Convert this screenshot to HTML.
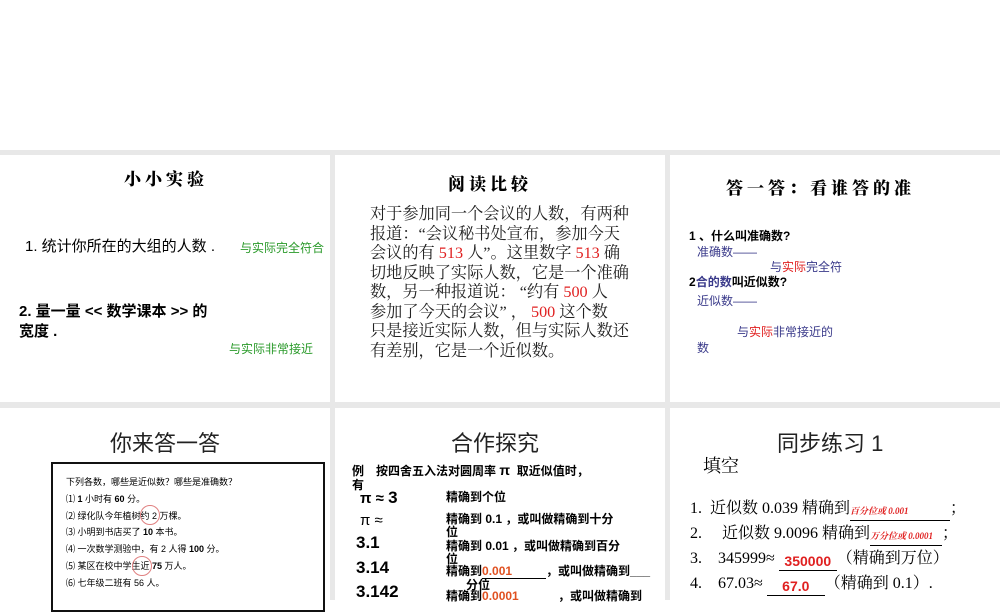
<!DOCTYPE html>
<html><head><meta charset="utf-8"><style>
*{margin:0;padding:0;box-sizing:border-box}
body{width:1000px;height:600px;background:#fff;position:relative;overflow:hidden;font-family:"Liberation Sans","Noto Sans CJK SC",sans-serif;color:#000}
.g{position:absolute;background:#e8e8e8}
.a{position:absolute;white-space:nowrap}
.cal{font-family:"Noto Serif CJK SC",serif;font-weight:900;letter-spacing:4px}
.se{font-family:"Liberation Serif","Noto Serif CJK SC",serif}
.gr{color:#2a9a2a}.bl{color:#3a3a8a}.rd{color:#e02020}.or{color:#e05020}
.u{display:inline-block;border-bottom:1px solid #000;line-height:18px;height:19px;vertical-align:bottom}
</style></head><body>
<div class="g" style="left:0;top:150px;width:1000px;height:5px"></div>
<div class="g" style="left:0;top:402px;width:1000px;height:6px"></div>
<div class="g" style="left:330px;top:150px;width:5px;height:450px"></div>
<div class="g" style="left:665px;top:150px;width:5px;height:450px"></div>

<!-- panel 1 -->
<div class="a cal" style="left:124px;top:165px;font-size:17px">小小实验</div>
<div class="a" style="left:25px;top:235px;font-size:15px">1. 统计你所在的大组的人数 .</div>
<div class="a gr" style="left:240px;top:239px;font-size:12px">与实际完全符合</div>
<div class="a" style="left:19px;top:302px;font-size:15px;font-weight:bold;line-height:20px">2. 量一量 &lt;&lt; 数学课本 &gt;&gt; 的<br>宽度 .</div>
<div class="a gr" style="left:229px;top:340px;font-size:12px">与实际非常接近</div>

<!-- panel 2 -->
<div class="a cal" style="left:448px;top:170px;font-size:17px">阅读比较</div>
<div class="a se" style="left:370px;top:205px;font-size:16.2px;line-height:19.5px;color:#222">对于参加同一个会议的人数，有两种<br>报道：“会议秘书处宣布，参加今天<br>会议的有 <span class="rd">513</span> 人”。这里数字 <span class="rd">513</span> 确<br>切地反映了实际人数，它是一个准确<br>数，另一种报道说：&nbsp;“约有 <span class="rd">500</span> 人<br>参加了今天的会议”&nbsp;，&nbsp;<span class="rd">500</span> 这个数<br>只是接近实际人数，但与实际人数还<br>有差别，它是一个近似数。</div>

<!-- panel 3 -->
<div class="a cal" style="left:726px;top:174px;font-size:17px">答一答：看谁答的准</div>
<div class="a" style="left:689px;top:227px;font-size:12px;font-weight:bold">1 、什么叫准确数?</div>
<div class="a bl" style="left:697px;top:243px;font-size:12px">准确数——</div>
<div class="a bl" style="left:770px;top:258px;font-size:12px">与<span class="rd">实际</span>完全符</div>
<div class="a" style="left:689px;top:273px;font-size:12px;font-weight:bold">2<span class="bl">合的数</span>叫近似数?</div>
<div class="a bl" style="left:697px;top:292px;font-size:12px">近似数——</div>
<div class="a bl" style="left:737px;top:323px;font-size:12px">与<span class="rd">实际</span>非常接近的</div>
<div class="a bl" style="left:697px;top:339px;font-size:12px">数</div>

<!-- panel 4 -->
<div class="a" style="left:110px;top:426px;font-size:22px;color:#222">你来答一答</div>
<div class="a" style="left:51px;top:462px;width:274px;height:150px;border:2px solid #111"></div>
<div class="a" style="left:66px;top:474px;font-size:9px;line-height:16.8px">下列各数，哪些是近似数？哪些是准确数？<br>⑴ <b>1</b> 小时有 <b>60</b> 分。<br>⑵ 绿化队今年植树约 2 万棵。<br>⑶ 小明到书店买了 <b>10</b> 本书。<br>⑷ 一次数学测验中，有 2 人得 <b>100</b> 分。<br>⑸ 某区在校中学生近 <b>75</b> 万人。<br>⑹ 七年级二班有 56 人。</div>
<div class="a" style="left:140px;top:505px;width:20px;height:20px;border:1px solid #e08080;border-radius:50%"></div>
<div class="a" style="left:132px;top:556px;width:20px;height:20px;border:1px solid #e08080;border-radius:50%"></div>

<!-- panel 5 -->
<div class="a" style="left:451px;top:426px;font-size:22px;color:#222">合作探究</div>
<div class="a" style="left:352px;top:463px;font-size:12px;font-weight:bold;line-height:14px">例　按四舍五入法对圆周率 <span style="font-size:14px">π</span>&nbsp; 取近似值时，<br>有</div>
<div class="a" style="left:360px;top:488px;font-size:15px;font-weight:bold">π ≈ <span style="font-size:17px">3</span></div>
<div class="a" style="left:360px;top:512px;font-size:15px">π ≈</div>
<div class="a" style="left:356px;top:533px;font-size:17px;font-weight:bold">3.1</div>
<div class="a" style="left:356px;top:558px;font-size:17px;font-weight:bold">3.14</div>
<div class="a" style="left:356px;top:582px;font-size:17px;font-weight:bold">3.142</div>
<div class="a" style="left:446px;top:488px;font-size:12px;font-weight:bold">精确到个位</div>
<div class="a" style="left:446px;top:513px;font-size:12px;font-weight:bold;line-height:13px">精确到 0.1 ，或叫做精确到十分<br>位</div>
<div class="a" style="left:446px;top:540px;font-size:12px;font-weight:bold;line-height:13px">精确到 0.01 ，或叫做精确到百分<br>位</div>
<div class="a" style="left:446px;top:562px;font-size:12px;font-weight:bold">精确到<span class="or" style="display:inline-block;width:64px;border-bottom:1px solid #000">0.001</span>，或叫做精确到___</div>
<div class="a" style="left:466px;top:576px;font-size:12px;font-weight:bold">分位</div>
<div class="a" style="left:446px;top:587px;font-size:12px;font-weight:bold">精确到<span class="or" style="display:inline-block;width:76px">0.0001</span>，或叫做精确到</div>

<!-- panel 6 -->
<div class="a" style="left:777px;top:426px;font-size:22px;color:#222">同步练习 1</div>
<div class="a se" style="left:703px;top:452px;font-size:18px">填空</div>
<div class="a se" style="left:690px;top:496px;font-size:16px;line-height:25px">1.&nbsp; 近似数 0.039 精确到<span class="u rd" style="width:100px;font-size:9px;font-style:italic;font-weight:bold">百分位或 0.001</span>；<br>2.&nbsp;&nbsp;&nbsp;&nbsp; 近似数 9.0096 精确到<span class="u rd" style="width:72px;font-size:9px;font-style:italic;font-weight:bold">万分位或 0.0001</span>；<br>3.&nbsp;&nbsp;&nbsp; 345999≈ <span class="u rd" style="width:58px;text-align:center;font-family:'Liberation Sans';font-weight:bold;font-size:14px">350000</span>（精确到万位）<br>4.&nbsp;&nbsp;&nbsp; 67.03≈ <span class="u rd" style="width:58px;text-align:center;font-family:'Liberation Sans';font-weight:bold;font-size:14px">67.0</span>（精确到 0.1）.</div>
</body></html>
